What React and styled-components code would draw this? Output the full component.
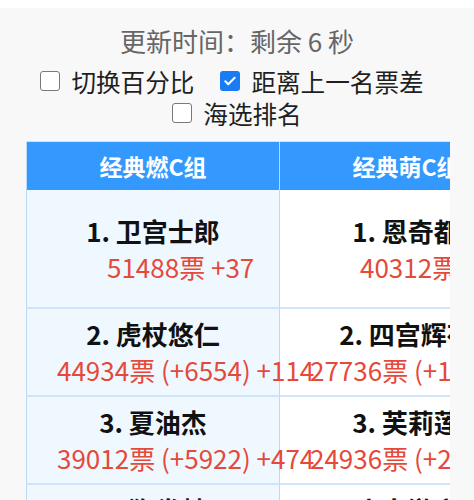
import React from "react";
import styled, { createGlobalStyle } from "styled-components";

const GlobalStyle = createGlobalStyle`
  html, body {
    margin: 0;
    background: #ffffff;
  }
  body {
    font-family: "Noto Sans CJK SC", "Noto Sans", sans-serif;
  }
`;

const groups = [
  {
    title: "经典燃C组",
    rows: [
      { name: "卫宫士郎", votes: 51488, inc: 37 },
      { name: "虎杖悠仁", votes: 44934, inc: 114 },
      { name: "夏油杰", votes: 39012, inc: 474 },
      { name: "狗卷棘", votes: 35120, inc: 263 },
    ],
  },
  {
    title: "经典萌C组",
    rows: [
      { name: "恩奇都", votes: 40312, inc: 52 },
      { name: "四宫辉夜", votes: 27736, inc: 126 },
      { name: "芙莉莲", votes: 24936, inc: 208 },
      { name: "小鸟游六花", votes: 22410, inc: 91 },
    ],
  },
  {
    title: "经典萌D组",
    rows: [
      { name: "雪之下雪乃", votes: 38840, inc: 75 },
      { name: "御坂美琴", votes: 30112, inc: 140 },
      { name: "蕾姆", votes: 26601, inc: 98 },
      { name: "牧濑红莉栖", votes: 21007, inc: 66 },
    ],
  },
];

const Page = styled.div`
  margin-top: 8px;
  background: #f8f8f8;
  min-height: 492px;
  padding-top: 13px;
  overflow: hidden;
`;

const Title = styled.div`
  text-align: center;
  font-size: 26px;
  line-height: 39px;
  color: #666666;
`;

const Options = styled.div`
  margin-top: 5px;
`;

const OptionRow = styled.div`
  display: flex;
  justify-content: center;
  gap: 26px;
  padding-right: ${(p) => p.$pad || 0}px;
`;

const Option = styled.label`
  display: flex;
  align-items: center;
  gap: 11px;
  font-size: 24.6px;
  line-height: 32px;
  color: #1f1f1f;
`;

const Box = styled.span`
  width: 20px;
  height: 20px;
  box-sizing: border-box;
  border-radius: 3px;
  border: ${(p) => (p.$on ? "none" : "1.5px solid #7a7a7a")};
  background: ${(p) => (p.$on ? "#1a7cf5" : "#ffffff")};
  display: flex;
  align-items: center;
  justify-content: center;
`;

const Scroller = styled.div`
  margin: 12px 24px 0 26px;
  border-top: 1px solid #cde6fb;
  overflow: hidden;
`;

const Table = styled.table`
  border-collapse: separate;
  border-spacing: 0;
  table-layout: fixed;
  width: 759px;
`;

const Th = styled.th`
  height: 48px;
  padding: 0;
  background: #3399ff;
  border-left: 1px solid #b9dbf7;
  color: #ffffff;
  font-size: 23px;
  font-weight: 700;
  text-align: center;
  white-space: nowrap;
`;

const Td = styled.td`
  padding: ${(p) => (p.$first ? "23px 30px 22px" : "7px 30px 7px")};
  background: ${(p) => (p.$tint ? "#eff8ff" : "#ffffff")};
  border-left: 1px solid #b9dbf7;
  border-bottom: 2px solid #cfe6fa;
  text-align: center;
  white-space: nowrap;
  vertical-align: top;
`;

const Name = styled.div`
  font-size: 26px;
  line-height: 36px;
  font-weight: 700;
  color: #111111;
`;

const Votes = styled.div`
  font-size: 26px;
  line-height: 36px;
  color: #e5493a;
  padding-left: ${(p) => (p.$first ? 50 : 0)}px;
`;

const Check = () => (
  <svg width="14" height="14" viewBox="0 0 24 24" fill="none">
    <path
      d="M4 12.5l5 5L20 6.5"
      stroke="#ffffff"
      strokeWidth="3.4"
      strokeLinecap="round"
      strokeLinejoin="round"
    />
  </svg>
);

const Toggle = ({ on, children }) => (
  <Option>
    <Box $on={on}>{on && <Check />}</Box>
    {children}
  </Option>
);

export default function App() {
  const rowCount = groups[0].rows.length;
  return (
    <>
      <GlobalStyle />
      <Page>
        <Title>更新时间：剩余 6 秒</Title>
        <Options>
          <OptionRow $pad={10}>
            <Toggle>切换百分比</Toggle>
            <Toggle on>距离上一名票差</Toggle>
          </OptionRow>
          <OptionRow>
            <Toggle>海选排名</Toggle>
          </OptionRow>
        </Options>
        <Scroller>
          <Table>
            <colgroup>
              {groups.map((g) => (
                <col key={g.title} style={{ width: 253 }} />
              ))}
            </colgroup>
            <thead>
              <tr>
                {groups.map((g) => (
                  <Th key={g.title}>{g.title}</Th>
                ))}
              </tr>
            </thead>
            <tbody>
              {Array.from({ length: rowCount }, (_, i) => (
                <tr key={i}>
                  {groups.map((g, gi) => {
                    const r = g.rows[i];
                    const diff = i > 0 ? g.rows[i - 1].votes - r.votes : null;
                    return (
                      <Td key={g.title} $first={i === 0} $tint={gi === 0}>
                        <Name>
                          {i + 1}. {r.name}
                        </Name>
                        <Votes $first={i === 0}>
                          {r.votes}票 {diff !== null && `(+${diff}) `}+{r.inc}
                        </Votes>
                      </Td>
                    );
                  })}
                </tr>
              ))}
            </tbody>
          </Table>
        </Scroller>
      </Page>
    </>
  );
}
